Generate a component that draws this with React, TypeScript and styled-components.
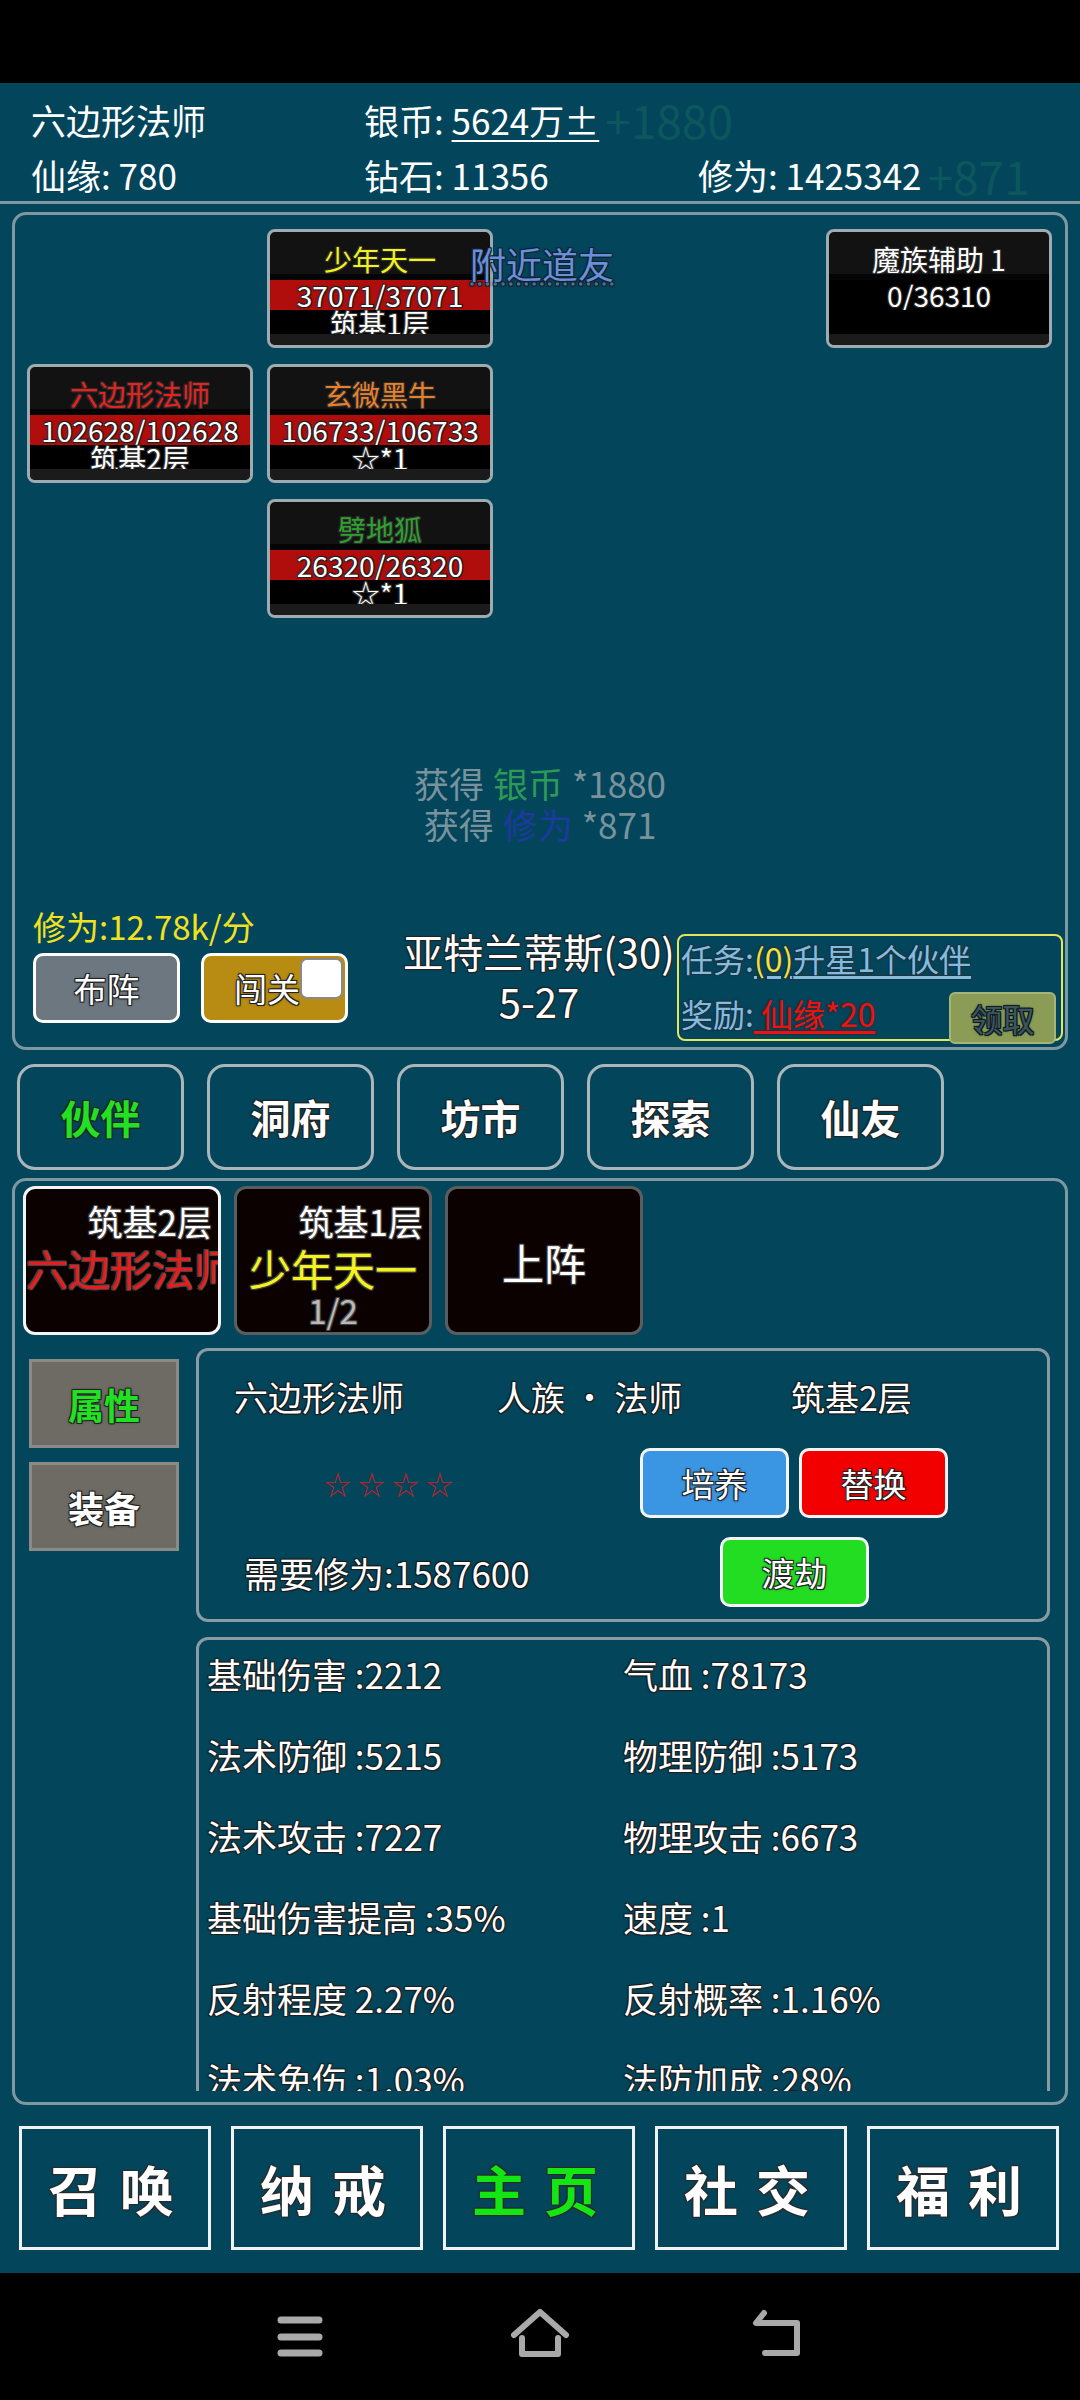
import React from "react";
import styled, { createGlobalStyle, css } from "styled-components";

const GlobalStyle = createGlobalStyle`
  html, body {
    margin: 0;
    padding: 0;
    background: #000;
  }
  body {
    font-family: "Noto Sans CJK SC", "Noto Sans", sans-serif;
  }
  * {
    box-sizing: border-box;
  }
`;

const outline = (c: string = "#1a1a1a") => css`
  text-shadow: -1px -1px 0 ${c}, 1px -1px 0 ${c}, -1px 1px 0 ${c}, 1px 1px 0 ${c}, 0 0 3px ${c};
`;

const TEAL = "#03465c";
const FRAME = "#7e98a1";

const Screen = styled.div`
  width: 1080px;
  height: 2400px;
  display: flex;
  flex-direction: column;
  background: #000;
  overflow: hidden;
`;

const StatusBar = styled.div`
  height: 83px;
  flex-shrink: 0;
  background: #000;
`;

const Main = styled.div`
  flex: 1;
  display: flex;
  flex-direction: column;
  background: ${TEAL};
  color: #fff;
`;

/* ---------- header ---------- */

const Header = styled.div`
  display: grid;
  grid-template-columns: 333px 334px 1fr;
  grid-template-rows: 58px 53px;
  padding: 7px 0 0 31px;
  border-bottom: 3px solid ${FRAME};
  font-size: 35px;
`;

const HeaderCell = styled.div`
  display: flex;
  align-items: center;
  white-space: nowrap;
  line-height: 1;
`;

const Underlined = styled.span`
  text-decoration: underline;
  text-underline-offset: 5px;
  text-decoration-thickness: 2px;
`;

const Ghost = styled.span`
  font-size: 46px;
  line-height: 1;
  margin-left: 6px;
  color: rgba(40, 150, 95, 0.22);
`;

/* ---------- battle panel ---------- */

const BattlePanel = styled.div`
  position: relative;
  margin: 8px 12px 0;
  height: 838px;
  border: 3px solid ${FRAME};
  border-radius: 14px;
  display: flex;
  flex-direction: column;
`;

const Formation = styled.div`
  display: grid;
  grid-template-columns: 226px 226px 1fr 226px 226px;
  grid-template-rows: repeat(3, 119px);
  row-gap: 16px;
  column-gap: 14px;
  padding: 14px 13px 0 12px;
`;

const UnitCard = styled.div<{ $col: number; $row: number }>`
  grid-column: ${(p) => p.$col};
  grid-row: ${(p) => p.$row};
  border: 3px solid #9eabb1;
  border-radius: 8px;
  background: #121212;
  overflow: hidden;
  display: flex;
  flex-direction: column;
  text-align: center;
  font-size: 28px;
  color: #fff;
  white-space: nowrap;
`;

const UnitName = styled.div<{ $color: string }>`
  height: 42px;
  padding-top: 12px;
  line-height: 30px;
  color: ${(p) => p.$color};
  ${outline("#2a2a2a")}
`;

const UnitHp = styled.div<{ $bg: string }>`
  height: 36px;
  border-top: 6px solid #050505;
  background: ${(p) => p.$bg};
  line-height: 30px;
  ${outline("#222")}
`;

const UnitLevel = styled.div`
  height: 24px;
  line-height: 26px;
  background: #000;
  ${outline("#333")}
`;

const UnitFoot = styled.div`
  flex: 1;
  background: #1b1b1b;
`;

const NearbyLink = styled.span`
  position: absolute;
  left: 455px;
  top: 28px;
  font-size: 36px;
  line-height: 40px;
  color: #6b8fd8;
  ${outline("#123")}
  text-decoration: underline dotted rgba(160, 180, 220, 0.5);
  text-underline-offset: 4px;
`;

const BattleLog = styled.div`
  margin-top: 144px;
  text-align: center;
  font-size: 35px;
  line-height: 41px;
  color: #7a929b;
`;

const LogItem = styled.span<{ $color: string }>`
  color: ${(p) => p.$color};
  margin: 0 9px;
`;

const BottomBar = styled.div`
  margin-top: auto;
  display: flex;
  align-items: flex-end;
  padding: 0 1px 6px 18px;
`;

const LeftGroup = styled.div`
  display: flex;
  flex-direction: column;
  margin-bottom: 18px;
  flex-shrink: 0;
`;

const RateText = styled.div`
  color: #f2e21e;
  font-size: 33px;
  line-height: 40px;
  margin-bottom: 7px;
  white-space: nowrap;
`;

const ButtonRow = styled.div`
  display: flex;
  gap: 21px;
`;

const FieldButton = styled.div<{ $bg: string; $end?: boolean }>`
  width: 147px;
  height: 70px;
  border: 3px solid #fff;
  border-radius: 10px;
  background: ${(p) => p.$bg};
  display: flex;
  align-items: center;
  justify-content: ${(p) => (p.$end ? "flex-end" : "center")};
  padding-right: ${(p) => (p.$end ? "2px" : "0")};
  font-size: 33px;
  color: #fff;
  ${outline("#222")}
`;

const CheckBox = styled.span`
  align-self: flex-start;
  margin-top: 2px;
  width: 43px;
  height: 41px;
  border-radius: 7px;
  background: #fff;
  border: 2px solid #8a8a8a;
  text-shadow: none;
`;

const StageInfo = styled.div`
  width: 382px;
  flex-shrink: 0;
  text-align: center;
  font-size: 40px;
  line-height: 50px;
  margin-bottom: 15px;
  white-space: nowrap;
  ${outline("#222")}
`;

const TaskBox = styled.div`
  margin-left: -53px;
  width: 386px;
  height: 107px;
  flex-shrink: 0;
  border: 2px solid #e6e65a;
  border-radius: 8px;
  padding-left: 2px;
  font-size: 32px;
  color: #82bde0;
  display: flex;
  flex-direction: column;
`;

const TaskLine = styled.div`
  height: 44px;
  line-height: 44px;
  white-space: nowrap;
  ${outline("#1c3340")}
`;

const TaskLink = styled.span<{ $color?: string }>`
  color: ${(p) => p.$color || "inherit"};
  text-decoration: underline;
  text-decoration-color: #82bde0;
  text-underline-offset: 4px;
`;

const RewardLine = styled.div`
  flex: 1;
  display: flex;
  align-items: flex-end;
  justify-content: space-between;
`;

const RewardText = styled.div`
  line-height: 44px;
  margin-bottom: 4px;
  white-space: nowrap;
  ${outline("#1c3340")}
`;

const RewardValue = styled.span`
  color: #ec1212;
  text-decoration: underline;
  text-underline-offset: 4px;
`;

const ClaimButton = styled.div`
  width: 107px;
  height: 52px;
  margin: 0 5px -5px 0;
  border: 2px solid #a5b577;
  border-radius: 6px;
  background: #8b9c56;
  display: flex;
  align-items: center;
  justify-content: center;
  font-size: 32px;
  color: #3c5560;
  ${outline("#0c1a20")}
`;

/* ---------- tabs ---------- */

const TabRow = styled.div`
  display: flex;
  gap: 23px;
  padding: 14px 0 0 17px;
`;

const TabButton = styled.div<{ $color: string }>`
  width: 167px;
  height: 106px;
  border: 3px solid #aab6ba;
  border-radius: 18px;
  display: flex;
  align-items: center;
  justify-content: center;
  font-size: 40px;
  font-weight: 700;
  color: ${(p) => p.$color};
  ${outline("#222")}
`;

/* ---------- partner panel ---------- */

const PartnerPanel = styled.div`
  margin: 8px 12px 0;
  height: 927px;
  border: 3px solid ${FRAME};
  border-radius: 14px;
  padding: 5px 0 0 8px;
  overflow: hidden;
`;

const HeroTabs = styled.div`
  display: flex;
  gap: 13px;
`;

const HeroTab = styled.div<{ $active?: boolean; $center?: boolean }>`
  width: 198px;
  height: 149px;
  border: 3px solid ${(p) => (p.$active ? "#f4f4f4" : "#5b5e60")};
  border-radius: 12px;
  background: #0b0101;
  overflow: hidden;
  display: flex;
  flex-direction: column;
  justify-content: ${(p) => (p.$center ? "center" : "flex-start")};
  white-space: nowrap;
`;

const HeroLevel = styled.div`
  margin-top: 12px;
  padding-right: 6px;
  text-align: right;
  font-size: 35px;
  line-height: 40px;
  color: #fff;
  ${outline("#444")}
`;

const HeroName = styled.div<{ $color: string }>`
  margin-top: 3px;
  text-align: center;
  font-size: 42px;
  line-height: 48px;
  color: ${(p) => p.$color};
  ${outline("#444")}
`;

const HeroSub = styled.div`
  text-align: center;
  font-size: 33px;
  line-height: 36px;
  color: #b9b9b9;
  ${outline("#444")}
`;

const PartnerBody = styled.div`
  display: flex;
  margin-top: 13px;
`;

const SideCol = styled.div`
  display: flex;
  flex-direction: column;
  gap: 14px;
  padding-top: 11px;
  margin-left: 6px;
  width: 150px;
  flex-shrink: 0;
`;

const SideButton = styled.div<{ $color: string }>`
  height: 89px;
  border: 3px solid #8b8a86;
  background: #6e6b64;
  display: flex;
  align-items: center;
  justify-content: center;
  font-size: 36px;
  font-weight: 700;
  color: ${(p) => p.$color};
  ${outline("#222")}
`;

const DetailCol = styled.div`
  margin-left: 17px;
  width: 854px;
  height: 743px;
  overflow: hidden;
  display: flex;
  flex-direction: column;
  gap: 15px;
`;

const InfoBox = styled.div`
  height: 274px;
  flex-shrink: 0;
  border: 3px solid #8a9ca2;
  border-radius: 12px;
  display: flex;
  flex-direction: column;
  font-size: 34px;
  color: #fff;
  ${outline("#1a1a1a")}
`;

const InfoHead = styled.div`
  display: grid;
  grid-template-columns: 263px 294px 1fr;
  align-items: center;
  height: 90px;
  padding-left: 35px;
  white-space: nowrap;
`;

const InfoRow = styled.div<{ $h: number }>`
  display: flex;
  align-items: center;
  height: ${(p) => p.$h}px;
`;

const Stars = styled.div`
  margin-left: 125px;
  width: 316px;
  flex-shrink: 0;
  font-size: 27px;
  letter-spacing: 7px;
  color: #b8222a;
  text-shadow: none;
`;

const NeedText = styled.div`
  margin-left: 45px;
  width: 476px;
  flex-shrink: 0;
  white-space: nowrap;
  font-size: 35px;
`;

const ActionButton = styled.div<{ $bg: string }>`
  width: 149px;
  height: 70px;
  flex-shrink: 0;
  margin-right: 10px;
  border: 3px solid #f4f4f4;
  border-radius: 10px;
  background: ${(p) => p.$bg};
  display: flex;
  align-items: center;
  justify-content: center;
  font-size: 33px;
  color: #fff;
  ${outline("#222")}
`;

const StatsBox = styled.div`
  flex-shrink: 0;
  border: 3px solid #8a9ca2;
  border-radius: 12px;
  padding: 12px 8px 40px;
  display: grid;
  grid-template-columns: 416px 1fr;
  row-gap: 37px;
  font-size: 35px;
  line-height: 44px;
  color: #fff;
  white-space: nowrap;
  ${outline("#1e1e1e")}
`;

/* ---------- bottom nav ---------- */

const BottomNav = styled.div`
  display: flex;
  gap: 20px;
  padding: 21px 0 0 19px;
`;

const NavButton = styled.div<{ $color: string }>`
  width: 192px;
  height: 124px;
  border: 3px solid #f2f2f2;
  display: flex;
  align-items: center;
  justify-content: center;
  font-size: 54px;
  font-weight: 700;
  letter-spacing: 18px;
  padding-left: 10px;
  color: ${(p) => p.$color};
  ${outline("#2a2a2a")}
`;

const SystemBar = styled.div`
  height: 127px;
  flex-shrink: 0;
  background: #000;
  display: flex;
  align-items: center;
  justify-content: center;
  gap: 180px;
`;

const SysIcon = styled.svg`
  width: 60px;
  height: 60px;
  display: block;
`;

const units = [
  { name: "少年天一", color: "#f2f21e", hp: "37071/37071", level: "筑基1层", col: 2, row: 1, bg: "#b00d0d" },
  { name: "六边形法师", color: "#e8201e", hp: "102628/102628", level: "筑基2层", col: 1, row: 2, bg: "#b00d0d" },
  { name: "玄微黑牛", color: "#e8802a", hp: "106733/106733", level: "☆*1", col: 2, row: 2, bg: "#b00d0d" },
  { name: "劈地狐", color: "#2ea02e", hp: "26320/26320", level: "☆*1", col: 2, row: 3, bg: "#b00d0d" },
  { name: "魔族辅助 1", color: "#ffffff", hp: "0/36310", level: "", col: 5, row: 1, bg: "#000" },
];

const tabs = [
  { label: "伙伴", color: "#22e022" },
  { label: "洞府", color: "#fff" },
  { label: "坊市", color: "#fff" },
  { label: "探索", color: "#fff" },
  { label: "仙友", color: "#fff" },
];

const stats = [
  ["基础伤害 :2212", "气血 :78173"],
  ["法术防御 :5215", "物理防御 :5173"],
  ["法术攻击 :7227", "物理攻击 :6673"],
  ["基础伤害提高 :35%", "速度 :1"],
  ["反射程度 2.27%", "反射概率 :1.16%"],
  ["法术免伤 :1.03%", "法防加成 :28%"],
  ["物防加成 :0%", "暴击率 :5%"],
];

const navs = [
  { label: "召唤", color: "#fff" },
  { label: "纳戒", color: "#fff" },
  { label: "主页", color: "#14e614" },
  { label: "社交", color: "#fff" },
  { label: "福利", color: "#fff" },
];

export default function App() {
  return (
    <Screen>
      <GlobalStyle />
      <StatusBar />
      <Main>
        <Header>
          <HeaderCell>六边形法师</HeaderCell>
          <HeaderCell>
            银币:&nbsp;<Underlined>5624万±</Underlined>
            <Ghost>+1880</Ghost>
          </HeaderCell>
          <HeaderCell />
          <HeaderCell>仙缘: 780</HeaderCell>
          <HeaderCell>钻石: 11356</HeaderCell>
          <HeaderCell>
            修为: 1425342<Ghost>+871</Ghost>
          </HeaderCell>
        </Header>

        <BattlePanel>
          <Formation>
            {units.map((u) => (
              <UnitCard key={u.name} $col={u.col} $row={u.row}>
                <UnitName $color={u.color}>{u.name}</UnitName>
                <UnitHp $bg={u.bg}>{u.hp}</UnitHp>
                <UnitLevel>{u.level}</UnitLevel>
                <UnitFoot />
              </UnitCard>
            ))}
          </Formation>
          <NearbyLink>附近道友</NearbyLink>

          <BattleLog>
            <div>
              获得<LogItem $color="#2d9a55">银币</LogItem>*1880
            </div>
            <div>
              获得<LogItem $color="#1d3a9e">修为</LogItem>*871
            </div>
          </BattleLog>

          <BottomBar>
            <LeftGroup>
              <RateText>修为:12.78k/分</RateText>
              <ButtonRow>
                <FieldButton $bg="#6c7780">布阵</FieldButton>
                <FieldButton $bg="#b88c12" $end>
                  闯关
                  <CheckBox />
                </FieldButton>
              </ButtonRow>
            </LeftGroup>
            <StageInfo>
              <div>亚特兰蒂斯(30)</div>
              <div>5-27</div>
            </StageInfo>
            <TaskBox>
              <TaskLine>
                任务:<TaskLink $color="#f0e040">(0)</TaskLink>
                <TaskLink>升星1个伙伴</TaskLink>
              </TaskLine>
              <RewardLine>
                <RewardText>
                  奖励:<RewardValue>&nbsp;仙缘*20</RewardValue>
                </RewardText>
                <ClaimButton>领取</ClaimButton>
              </RewardLine>
            </TaskBox>
          </BottomBar>
        </BattlePanel>

        <TabRow>
          {tabs.map((t) => (
            <TabButton key={t.label} $color={t.color}>
              {t.label}
            </TabButton>
          ))}
        </TabRow>

        <PartnerPanel>
          <HeroTabs>
            <HeroTab $active>
              <HeroLevel>筑基2层</HeroLevel>
              <HeroName $color="#e81c1c">六边形法师</HeroName>
            </HeroTab>
            <HeroTab>
              <HeroLevel>筑基1层</HeroLevel>
              <HeroName $color="#f4f41c">少年天一</HeroName>
              <HeroSub>1/2</HeroSub>
            </HeroTab>
            <HeroTab $center>
              <HeroName $color="#fff">上阵</HeroName>
            </HeroTab>
          </HeroTabs>

          <PartnerBody>
            <SideCol>
              <SideButton $color="#22e022">属性</SideButton>
              <SideButton $color="#fff">装备</SideButton>
            </SideCol>

            <DetailCol>
              <InfoBox>
                <InfoHead>
                  <span>六边形法师</span>
                  <span>人族 · 法师</span>
                  <span>筑基2层</span>
                </InfoHead>
                <InfoRow $h={84}>
                  <Stars>☆☆☆☆</Stars>
                  <ActionButton $bg="#3a95e3">培养</ActionButton>
                  <ActionButton $bg="#f20000">替换</ActionButton>
                </InfoRow>
                <InfoRow $h={94}>
                  <NeedText>需要修为:1587600</NeedText>
                  <ActionButton $bg="#22dd22">渡劫</ActionButton>
                </InfoRow>
              </InfoBox>

              <StatsBox>
                {stats.flat().map((s) => (
                  <div key={s}>{s}</div>
                ))}
              </StatsBox>
            </DetailCol>
          </PartnerBody>
        </PartnerPanel>

        <BottomNav>
          {navs.map((n) => (
            <NavButton key={n.label} $color={n.color}>
              {n.label}
            </NavButton>
          ))}
        </BottomNav>
      </Main>

      <SystemBar>
        <SysIcon viewBox="0 0 60 60">
          <g stroke="#a9a9a9" strokeWidth="7" strokeLinecap="round">
            <line x1="11" y1="13" x2="49" y2="13" />
            <line x1="11" y1="30" x2="49" y2="30" />
            <line x1="11" y1="46" x2="49" y2="46" />
          </g>
        </SysIcon>
        <SysIcon viewBox="0 0 60 60">
          <g fill="none" stroke="#a9a9a9" strokeWidth="6" strokeLinecap="round" strokeLinejoin="round">
            <path d="M4 28 L30 5 L56 28" />
            <path d="M12 31 V47 H48 V31" />
          </g>
        </SysIcon>
        <SysIcon viewBox="0 0 60 60">
          <g fill="none" stroke="#a9a9a9" strokeWidth="6" strokeLinecap="round" strokeLinejoin="round">
            <path d="M14 6 L6 16 H47 V46 H15" />
          </g>
        </SysIcon>
      </SystemBar>
    </Screen>
  );
}
